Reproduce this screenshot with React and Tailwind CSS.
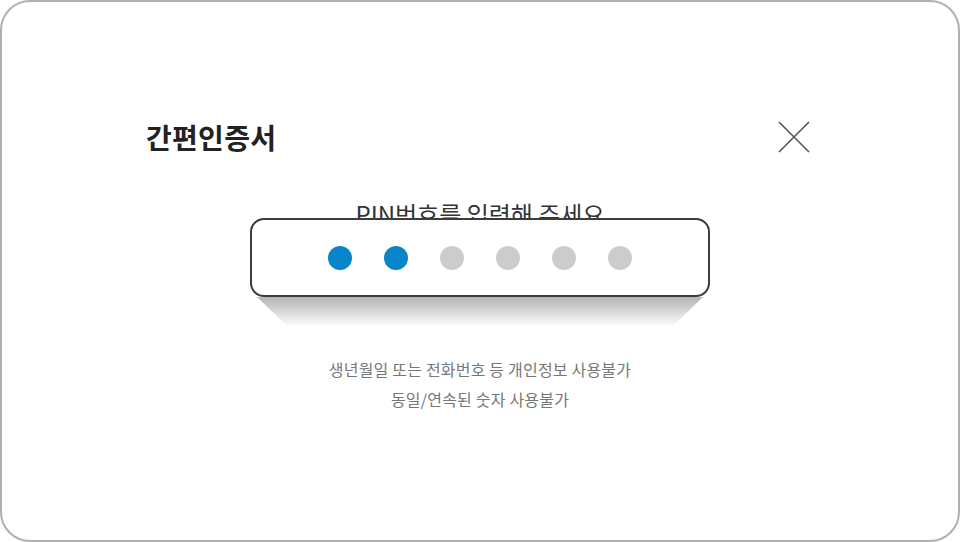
import React from 'react';

const PIN_LENGTH = 6;

const PinDots = ({ filled }) => (
  <div className="flex items-center justify-center gap-8">
    {Array.from({ length: PIN_LENGTH }).map((_, i) => (
      <span
        key={i}
        className={
          i < filled
            ? 'w-6 h-6 rounded-full bg-[#0785c8]'
            : 'w-6 h-6 rounded-full bg-[#cccccc]'
        }
      />
    ))}
  </div>
);

const CloseIcon = () => (
  <svg width="32" height="32" viewBox="0 0 32 32" fill="none">
    <path d="M1 1 L31 31 M31 1 L1 31" stroke="#555" strokeWidth="1.6" />
  </svg>
);

export default function App() {
  return (
    <div
      className="w-[960px] h-[542px] bg-white border-2 border-[#b0b0b0] rounded-[30px] overflow-hidden"
      style={{ fontFamily: '"Noto Sans CJK KR", "Noto Sans", sans-serif' }}
    >
      <div className="flex items-center justify-between pl-[144px] pr-[148px] pt-[117px]">
        <h1 className="text-[28px] leading-[36px] font-bold text-[#222] tracking-[0.3px]">간편인증서</h1>
        <button className="p-0">
          <CloseIcon />
        </button>
      </div>

      <div className="flex flex-col items-center mt-[44px]">
        <p className="text-[24px] leading-[30px] text-[#333]">
          PIN번호를 입력해 주세요
        </p>

        {/* pin box sits on top of the prompt line */}
        <div className="relative -mt-[11px] w-[460px] h-[79px] bg-white border-2 border-[#3c3c3c] rounded-[14px] flex items-center justify-center">
          <PinDots filled={2} />
        </div>
        <div className="w-[446px] h-[30px] bg-gradient-to-b from-[#b4b4b4] to-white [clip-path:polygon(0_0,100%_0,93%_100%,7%_100%)]" />

        <div className="mt-[27px] text-center text-[16px] leading-[30px] text-[#777] tracking-[0.2px]">
          <p>생년월일 또는 전화번호 등 개인정보 사용불가</p>
          <p>동일/연속된 숫자 사용불가</p>
        </div>
      </div>
    </div>
  );
}
